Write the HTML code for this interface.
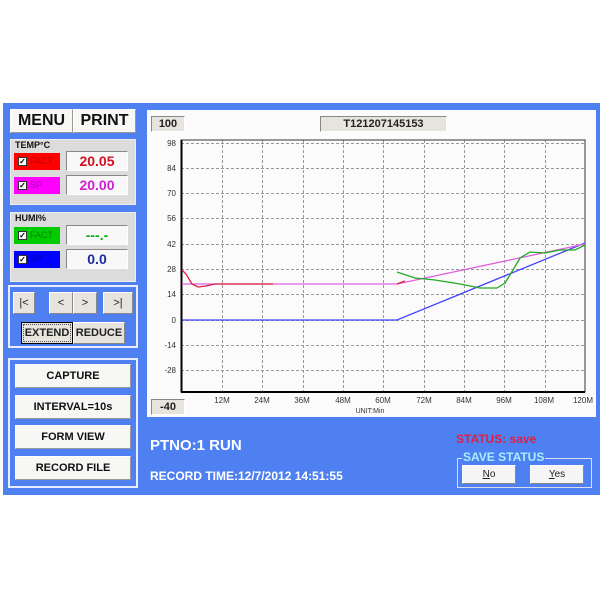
<!DOCTYPE html>
<html><head><meta charset="utf-8"><style>
*{box-sizing:border-box;margin:0;padding:0}
body{width:600px;height:600px;background:#fff;position:relative;font-family:"Liberation Sans",Arial,sans-serif;overflow:hidden}
.a{position:absolute}
.blue{left:3px;top:103px;width:597px;height:392px;background:#4f80f2}
.btn{position:absolute;background:#f7f7f5;border:1px solid #fff;border-right-color:#999;border-bottom-color:#999;font-weight:bold;text-align:center;font-size:11px;color:#111}
.grp{position:absolute;background:#dcdcdc;border:1px solid #eee}
.lbl{position:absolute;font-size:9px;font-weight:bold;color:#111}
.chip{position:absolute;width:46px;height:17px;font-size:9px}
.chip i{position:absolute;left:4px;top:4px;width:9px;height:9px;background:#fff;border:1px solid #333;font-style:normal;font-size:8px;line-height:8px;text-align:center;color:#000;font-weight:bold}
.chip span{position:absolute;left:16px;top:3px}
.val{position:absolute;width:62px;height:20px;background:#f8f8f8;border:1px solid #888;border-right-color:#fff;border-bottom-color:#fff;font-weight:bold;font-size:14px;text-align:center;line-height:18px}
.nb{position:absolute;background:#e6e4dc;border:1px solid #fff;border-right-color:#888;border-bottom-color:#888;font-size:11px;text-align:center;line-height:20px;color:#222}
</style></head><body>
<div class="a blue"></div>
<div class="btn" style="left:10px;top:109px;width:63px;height:24px;font-size:16px;line-height:22px">MENU</div>
<div class="btn" style="left:73px;top:109px;width:63px;height:24px;font-size:16px;line-height:22px">PRINT</div>

<div class="grp" style="left:10px;top:139px;width:126px;height:66px"></div>
<div class="lbl" style="left:15px;top:140px">TEMP°C</div>
<div class="chip" style="left:14px;top:153px;background:#f00;color:#b00"><i>✓</i><span>FACT</span></div>
<div class="val" style="left:66px;top:151px;color:#d01020">20.05</div>
<div class="chip" style="left:14px;top:177px;background:#f0f;color:#a0a"><i>✓</i><span>SP</span></div>
<div class="val" style="left:66px;top:175px;color:#d020d0">20.00</div>

<div class="grp" style="left:10px;top:212px;width:126px;height:70px"></div>
<div class="lbl" style="left:15px;top:213px">HUMI%</div>
<div class="chip" style="left:14px;top:227px;background:#0c0;color:#080"><i>✓</i><span>FACT</span></div>
<div class="val" style="left:66px;top:225px;color:#1a1">---.-</div>
<div class="chip" style="left:14px;top:251px;background:#00f;color:#00a"><i>✓</i><span>SP</span></div>
<div class="val" style="left:66px;top:249px;color:#1a2aa0">0.0</div>

<div class="a" style="left:8px;top:285px;width:130px;height:63px;border:2px solid #e8ecff"></div>
<div class="nb" style="left:13px;top:292px;width:22px;height:22px">|&lt;</div>
<div class="nb" style="left:49px;top:292px;width:24px;height:22px">&lt;</div>
<div class="nb" style="left:73px;top:292px;width:24px;height:22px">&gt;</div>
<div class="nb" style="left:103px;top:292px;width:30px;height:22px">&gt;|</div>
<div class="nb" style="left:21px;top:322px;width:52px;height:22px;font-weight:bold;border:1px solid #000;outline:1px dotted #555;outline-offset:-3px">EXTEND</div>
<div class="nb" style="left:73px;top:322px;width:52px;height:22px;font-weight:bold">REDUCE</div>

<div class="a" style="left:8px;top:358px;width:130px;height:130px;border:2px solid #e8ecff"></div>
<div class="btn" style="left:15px;top:364px;width:116px;height:24px;line-height:22px">CAPTURE</div>
<div class="btn" style="left:15px;top:395px;width:116px;height:24px;line-height:22px">INTERVAL=10s</div>
<div class="btn" style="left:15px;top:425px;width:116px;height:24px;line-height:22px">FORM VIEW</div>
<div class="btn" style="left:15px;top:456px;width:116px;height:24px;line-height:22px">RECORD FILE</div>

<div class="a" style="left:147px;top:110px;width:449px;height:307px;background:#fbfbfb"></div>
<div class="nb" style="left:151px;top:116px;width:34px;height:16px;line-height:14px;font-weight:bold;border-color:#888 #fff #fff #888">100</div>
<div class="nb" style="left:320px;top:116px;width:127px;height:16px;line-height:14px;font-weight:bold;border-color:#888 #fff #fff #888">T121207145153</div>
<div class="nb" style="left:151px;top:399px;width:34px;height:16px;line-height:14px;font-weight:bold;border-color:#888 #fff #fff #888">-40</div>
<svg class="a" style="left:0;top:0" width="600" height="600" font-family="Liberation Sans, Arial, sans-serif" font-size="8" fill="#333">
<g stroke="#999" stroke-dasharray="3,2" stroke-width="1">
<line x1="181" x2="585" y1="143.5" y2="143.5"/><line x1="181" x2="585" y1="168.5" y2="168.5"/><line x1="181" x2="585" y1="193.5" y2="193.5"/><line x1="181" x2="585" y1="218.5" y2="218.5"/><line x1="181" x2="585" y1="244.5" y2="244.5"/><line x1="181" x2="585" y1="269.5" y2="269.5"/><line x1="181" x2="585" y1="294.5" y2="294.5"/><line x1="181" x2="585" y1="320.5" y2="320.5"/><line x1="181" x2="585" y1="345.5" y2="345.5"/><line x1="181" x2="585" y1="370.5" y2="370.5"/>
<line y1="140" y2="392" x1="222.5" x2="222.5"/><line y1="140" y2="392" x1="262.5" x2="262.5"/><line y1="140" y2="392" x1="303.5" x2="303.5"/><line y1="140" y2="392" x1="343.5" x2="343.5"/><line y1="140" y2="392" x1="383.5" x2="383.5"/><line y1="140" y2="392" x1="424.5" x2="424.5"/><line y1="140" y2="392" x1="464.5" x2="464.5"/><line y1="140" y2="392" x1="504.5" x2="504.5"/><line y1="140" y2="392" x1="545.5" x2="545.5"/>
</g>
<rect x="181" y="140" width="404" height="252" fill="none" stroke="#333" stroke-width="1"/>
<line x1="181.5" y1="140" x2="181.5" y2="392" stroke="#000" stroke-width="2"/>
<line x1="181" y1="392" x2="585" y2="392" stroke="#000" stroke-width="2"/>
<g text-anchor="end"><text x="176" y="146">98</text><text x="176" y="171">84</text><text x="176" y="196">70</text><text x="176" y="221">56</text><text x="176" y="247">42</text><text x="176" y="272">28</text><text x="176" y="297">14</text><text x="176" y="323">0</text><text x="176" y="348">-14</text><text x="176" y="373">-28</text></g>
<g text-anchor="middle"><text x="222" y="403">12M</text><text x="262" y="403">24M</text><text x="302" y="403">36M</text><text x="343" y="403">48M</text><text x="383" y="403">60M</text><text x="424" y="403">72M</text><text x="464" y="403">84M</text><text x="504" y="403">96M</text><text x="544" y="403">108M</text><text x="583" y="403">120M</text><text x="370" y="413" font-size="7">UNIT:Min</text></g>
<g fill="none" stroke-width="1.3">
<polyline stroke="#44f" points="182,320 397,320 585,243"/>
<polyline stroke="#e060e0" points="182,284 397,284 585,244"/>
<polyline stroke="#e02040" points="182,270 186,274 192,284 198,287 206,286 215,284 273,284"/>
<polyline stroke="#e02040" points="397,284 405,281"/>
<polyline stroke="#2a2" points="397,272 415,278 435,280 460,284 480,288 497,288 505,283 513,270 520,258 530,252 545,253 560,250 575,250 585,245"/>
</g>
</svg>

<div class="a" style="left:150px;top:437px;color:#fff;font-weight:bold;font-size:15px">PTNO:1 RUN</div>
<div class="a" style="left:150px;top:469px;color:#fff;font-weight:bold;font-size:12px">RECORD TIME:12/7/2012 14:51:55</div>
<div class="a" style="left:456px;top:432px;color:#e02040;font-size:12px;font-weight:bold">STATUS: save</div>
<div class="a" style="left:457px;top:458px;width:135px;height:30px;border:1px solid #dde"></div>
<div class="a" style="left:462px;top:450px;background:#4f80f2;color:#aef;font-size:12px;font-weight:bold;padding:0 1px">SAVE STATUS</div>
<div class="nb" style="left:462px;top:465px;width:54px;height:19px;line-height:17px;background:#f5f5f5;font-size:10px"><u>N</u>o</div>
<div class="nb" style="left:530px;top:465px;width:54px;height:19px;line-height:17px;background:#f5f5f5;font-size:10px"><u>Y</u>es</div>
</body></html>
